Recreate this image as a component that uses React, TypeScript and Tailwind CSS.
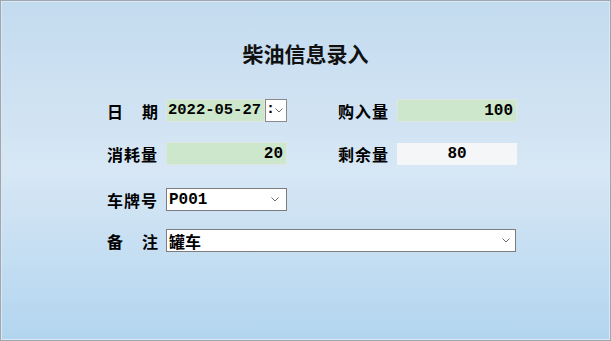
import React from 'react';

const cjk = '"Noto Sans CJK SC", "Noto Sans", sans-serif';
const mono = '"Liberation Mono", "Noto Sans CJK SC", monospace';

const Chevron: React.FC = () => (
  <svg width="8" height="5" viewBox="0 0 8 5" className="shrink-0">
    <polyline points="0.5,0.5 4,4 7.5,0.5" fill="none" stroke="#6b6b6b" strokeWidth="1" />
  </svg>
);

const Label: React.FC<{ text: string; spread?: boolean }> = ({ text, spread }) => (
  <div className="w-[59px] shrink-0 text-[16px] font-bold text-black" style={{ fontFamily: cjk }}>
    {spread ? (
      <div className="flex w-[51px] justify-between">
        {text.split('').map((c, i) => (
          <span key={i}>{c}</span>
        ))}
      </div>
    ) : (
      <span className="tracking-[1px]">{text}</span>
    )}
  </div>
);

const GreenField: React.FC<{ value: string; width: string }> = ({ value, width }) => (
  <div
    className={`${width} h-[23px] shrink-0 bg-[#cde7cc] border border-[#dfe5df] flex items-center justify-end pr-[3px] text-[16px] font-bold text-black`}
    style={{ fontFamily: mono }}
  >
    {value}
  </div>
);

const App: React.FC = () => {
  return (
    <div className="w-[611px] h-[341px] border border-[#9ea7b0] bg-gradient-to-b from-[#c3dbef] via-[#d7e7f5] to-[#b2d5ef] overflow-hidden">
      <div className="h-full w-full border border-[#dbe7f2]">
        <div
          className="mt-[37px] h-[28px] text-center text-[21px] font-bold text-[#111] leading-[28px]"
          style={{ fontFamily: cjk }}
        >
          柴油信息录入
        </div>

        {/* row 1 */}
        <div className="mt-[32px] pl-[105px] flex items-center h-[23px]">
          <Label text="日期" spread />
          <div className="flex w-[121px] shrink-0">
            <div
              className="w-[99px] h-[23px] bg-[#cde7cc] border border-[#dfe5df] flex items-center pl-[1px] text-[15.5px] font-bold text-black whitespace-nowrap overflow-hidden"
              style={{ fontFamily: mono }}
            >
              2022-05-27
            </div>
            <div className="w-[22px] h-[23px] bg-white border border-[#8a8a8a] flex items-center relative overflow-hidden">
              <span className="absolute left-[0px] top-[1px] text-[15px] font-bold leading-[18px]" style={{ fontFamily: mono }}>
                :
              </span>
              <div className="ml-[9px]">
                <Chevron />
              </div>
            </div>
          </div>
          <div className="w-[51px] shrink-0" />
          <Label text="购入量" />
          <GreenField value="100" width="w-[120px]" />
        </div>

        {/* row 2 */}
        <div className="mt-[20px] pl-[105px] flex items-center h-[23px]">
          <Label text="消耗量" />
          <GreenField value="20" width="w-[121px]" />
          <div className="w-[51px] shrink-0" />
          <Label text="剩余量" />
          <div
            className="w-[120px] h-[22px] shrink-0 bg-[#f5f6f7] flex items-center justify-center text-[16px] font-bold text-black"
            style={{ fontFamily: mono }}
          >
            80
          </div>
        </div>

        {/* row 3 */}
        <div className="mt-[23px] pl-[105px] flex items-center h-[23px]">
          <Label text="车牌号" />
          <div
            className="w-[121px] h-[23px] shrink-0 bg-white border border-[#7c7c7c] flex items-center justify-between pl-[2px] pr-[7px] text-[16px] font-bold text-black"
            style={{ fontFamily: mono }}
          >
            <span>P001</span>
            <Chevron />
          </div>
        </div>

        {/* row 4 */}
        <div className="mt-[18px] pl-[105px] flex items-center h-[23px]">
          <Label text="备注" spread />
          <div className="w-[350px] h-[23px] shrink-0 bg-white border border-[#7c7c7c] flex items-center justify-between pl-[2px] pr-[5px] text-[16px] font-bold text-black"
            style={{ fontFamily: cjk }}
          >
            <span>罐车</span>
            <Chevron />
          </div>
        </div>
      </div>
    </div>
  );
};

export default App;
